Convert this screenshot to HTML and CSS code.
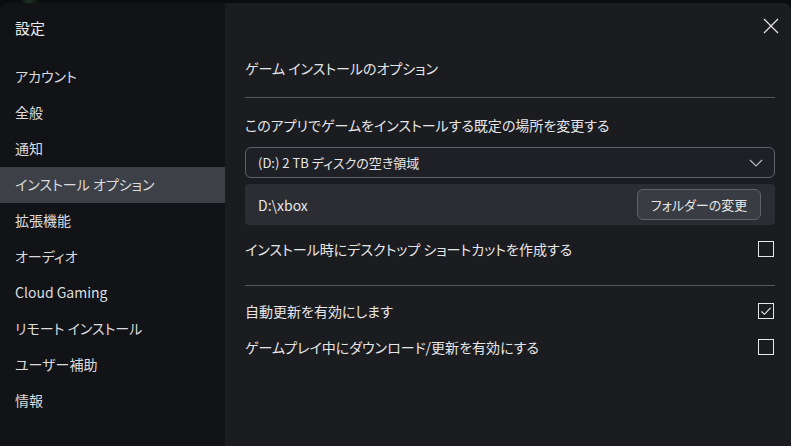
FILE: index.html
```html
<!DOCTYPE html>
<html lang="ja">
<head>
  <meta charset="utf-8">
  <title>設定</title>
  <link rel="stylesheet" href="styles.css">
</head>
<body>
  <div class="backdrop"></div>
  <div class="window">
    <nav class="sidebar">
      <div class="title">設定</div>
      <ul class="nav">
        <li>アカウント</li>
        <li>全般</li>
        <li>通知</li>
        <li class="active">インストール オプション</li>
        <li>拡張機能</li>
        <li>オーディオ</li>
        <li>Cloud Gaming</li>
        <li>リモート インストール</li>
        <li>ユーザー補助</li>
        <li>情報</li>
      </ul>
    </nav>

    <main class="content">
      <button class="close" aria-label="閉じる">
        <svg width="16" height="16" viewBox="0 0 16 16"><path d="M1 1L15 15M15 1L1 15" stroke="#e8e8e8" stroke-width="1.2" fill="none"/></svg>
      </button>

      <h2 class="heading">ゲーム インストールのオプション</h2>
      <hr class="divider">

      <div class="label">このアプリでゲームをインストールする既定の場所を変更する</div>
      <div class="select">
        <span>(D:) 2 TB ディスクの空き領域</span>
        <svg width="14" height="8" viewBox="0 0 14 8"><path d="M1 1L7 7L13 1" stroke="#b8bac0" stroke-width="1.2" fill="none"/></svg>
      </div>
      <div class="folder">
        <span>D:\xbox</span>
        <button class="folder-btn">フォルダーの変更</button>
      </div>

      <div class="option first">
        <span>インストール時にデスクトップ ショートカットを作成する</span>
        <span class="check"></span>
      </div>
      <hr class="divider second">

      <div class="option after-line">
        <span>自動更新を有効にします</span>
        <span class="check">
          <svg width="14" height="14" viewBox="0 0 14 14"><path d="M2.5 7.5L5.5 10.3L11.5 3.8" stroke="#f0f0f0" stroke-width="1.1" fill="none"/></svg>
        </span>
      </div>
      <div class="option">
        <span>ゲームプレイ中にダウンロード/更新を有効にする</span>
        <span class="check"></span>
      </div>
    </main>
  </div>
</body>
</html>
```

FILE: styles.css
```css
body {
  margin: 0;
  background: #0b0c0e;
  font-family: "Noto Sans CJK JP", "Noto Sans", sans-serif;
  font-size: 14px;
  font-feature-settings: "palt";
  color: #e6e6e8;
  overflow: hidden;
}
.backdrop {
  height: 3px;
  background: linear-gradient(90deg, #0b0c0e 20px, #1b3322 28px, #0b0c0e 40px);
}
.window {
  display: flex;
  height: 443px;
}
.sidebar {
  width: 225px;
  background: #121317;
  border-top-left-radius: 8px;
}
.title {
  margin: 15px 15px 0;
  height: 20px;
  line-height: 20px;
  font-size: 15px;
  color: #ececec;
}
.nav {
  list-style: none;
  margin: 21px 0 0;
  padding: 0;
}
.nav li {
  height: 36px;
  line-height: 35px;
  padding-left: 15px;
  color: #dcdcde;
}
.nav li.active {
  background: #3d4047;
}
.content {
  position: relative;
  flex: 1;
  background: #1b1c20;
  border-top-right-radius: 8px;
  padding: 55px 16px 0 20px;
}
.close {
  position: absolute;
  top: 12px;
  right: 9px;
  width: 22px;
  height: 22px;
  padding: 0;
  border: 0;
  background: none;
  display: flex;
  align-items: center;
  justify-content: center;
}
.heading {
  margin: 0;
  font-size: 14px;
  font-weight: normal;
  line-height: 20px;
  height: 20px;
}
.divider {
  margin: 19px 0 0;
  border: 0;
  height: 1px;
  background: #55575c;
}
.divider.second {
  margin-top: 18px;
}
.label {
  margin-top: 17px;
  line-height: 20px;
}
.select {
  margin-top: 12px;
  height: 29px;
  border: 1px solid #5d6169;
  border-radius: 6px;
  background: #1e2025;
  display: flex;
  align-items: center;
  justify-content: space-between;
  padding: 0 11px 0 12px;
  font-size: 13px;
}
.folder {
  margin-top: 6px;
  height: 41px;
  background: #2b2d32;
  border-radius: 4px;
  display: flex;
  align-items: center;
  justify-content: space-between;
  padding: 0 14px 0 13px;
}
.folder-btn {
  width: 124px;
  height: 31px;
  border: 1px solid #5f636a;
  border-radius: 6px;
  background: #393c42;
  color: #e6e6e8;
  font-family: inherit;
  font-feature-settings: "palt";
  font-size: 13px;
}
.option {
  height: 36px;
  display: flex;
  align-items: center;
  justify-content: space-between;
}
.option span:first-child {
  margin-top: -1px;
}
.option.first {
  margin-top: 6px;
}
.option.after-line {
  margin-top: 7px;
}
.check {
  width: 14px;
  height: 14px;
  border: 1px solid #e8e8e8;
  display: flex;
  align-items: center;
  justify-content: center;
  margin-right: 1px;
}
```
